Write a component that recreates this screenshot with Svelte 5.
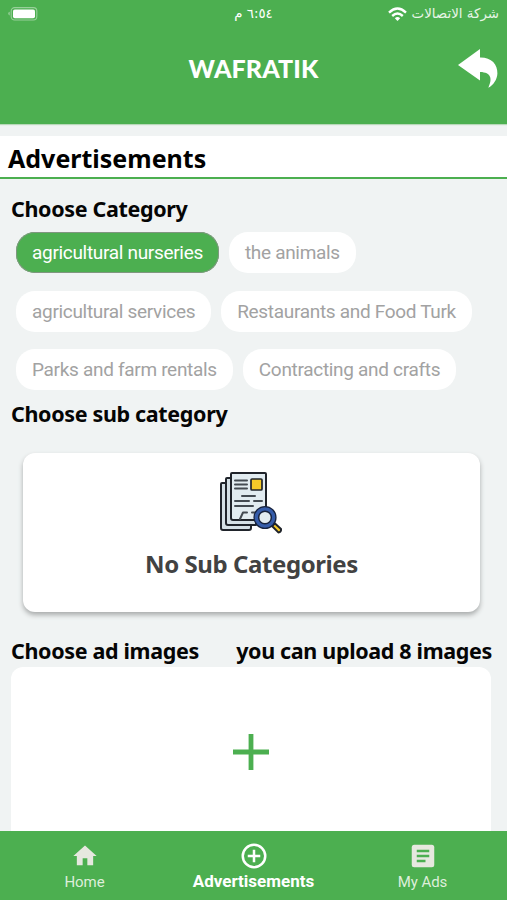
<script>
  const rows = [
    [
      { name: 'agricultural nurseries', active: true },
      { name: 'the animals' },
    ],
    [{ name: 'agricultural services' }, { name: 'Restaurants and Food Turk' }],
    [{ name: 'Parks and farm rentals' }, { name: 'Contracting and crafts' }],
  ];
</script>

<div class="app">
  <header>
    <div class="status">
      <svg class="battery" width="30" height="14" viewBox="0 0 30 14">
        <path d="M1.600 4.700Q.4 5 .4 6.500T1.600 8.400Z" fill="#a5d6a7" />
        <rect x="3.2" y=".6" width="25.6" height="12.4" rx="3.4" fill="none" stroke="#98d09a" stroke-width="1.1" />
        <rect x="5" y="2.4" width="22" height="8.800" rx="1.8" fill="#fff" />
      </svg>
      <span class="time" dir="rtl">٦:٥٤ م</span>
      <div class="carrier">
        <svg width="19" height="15" viewBox="0 0 19 15" fill="none" stroke="#fff" stroke-width="2.4">
          <path d="M1 5.600Q9.500-2.400 18 5.600" />
          <path d="M4.200 9Q9.500 4.100 14.800 9" />
          <path d="M9.500 14 6.800 11.200Q9.500 9 12.200 11.200Z" fill="#fff" stroke="none" />
        </svg>
        <span dir="rtl">شركة الاتصالات</span>
      </div>
    </div>
    <div class="brand">
      <h1>WAFRATIK</h1>
      <svg class="back" width="40" height="39" viewBox="0 0 40 39">
        <path d="M0 16 22 0V8.400C33.500 8.200 39.700 15 39.400 24.500 39.200 30.500 35.500 36 30.300 38.800 34.500 30 33.500 23.200 22 23V31.500Z" fill="#fff" />
      </svg>
    </div>
  </header>

  <h2 class="page-title"><span>Advertisements</span></h2>

  <main>
    <h3>Choose Category</h3>
    <div class="categories">
      {#each rows as row}
        <div class="row">
          {#each row as item}
            <button class="chip" class:active={item.active}>{item.name}</button>
          {/each}
        </div>
      {/each}
    </div>

    <h3 class="sub">Choose sub category</h3>
    <section class="empty">
      <svg width="64" height="62" viewBox="0 0 64 62" stroke="#20242b" stroke-width="2" stroke-linejoin="round" stroke-linecap="round">
        <path d="M6 11H2Q1 11 1 12V56Q1 58 3 58H29Q31 58 31 56V52" fill="#d5e0e6" />
        <path d="M11 6H7Q6 6 6 7V51Q6 53 8 53H36V48" fill="#d5e0e6" />
        <path d="M12 1H45Q46 1 46 2V48H13Q11 48 11 46V2Q11 1 12 1Z" fill="#e2ecf1" />
        <path d="M15 8.500H27M15 12.500H27M15 16.500H27M22 24H35M15 29H29M34 29H42M15 34H33M20 47 23 40.500H27M32 40.500H36" fill="none" stroke="#444b52" />
        <rect x="31" y="7" width="11" height="11" rx="1" fill="#f5ca29" stroke-width="1.7" />
        <path d="M52 54 55 51.500 61 57Q61.500 60 58.300 60.400Z" fill="#f5ca29" />
        <circle cx="45" cy="45.5" r="8.600" fill="#e2ecf1" stroke="#17233e" stroke-width="6" />
        <circle cx="45" cy="45.5" r="8.700" fill="none" stroke="#355ca9" stroke-width="3.3" />
      </svg>
      <p>No Sub Categories</p>
    </section>

    <div class="upload-title">
      <h3>Choose ad images</h3>
      <h3>you can upload 8 images</h3>
    </div>
    <button class="upload" aria-label="Add">
      <svg width="36" height="36" viewBox="0 0 36 36"><path d="M18 0V36M0 18H36" stroke="#4caf50" stroke-width="4.8" /></svg>
    </button>
  </main>

  <nav>
    <div class="tab">
      <svg width="28" height="28" viewBox="0 0 24 24"><path d="M10 20v-6h4v6h5v-8h3L12 3 2 12h3v8z" fill="#e6e8df" /></svg>
      <span>Home</span>
    </div>
    <div class="tab current">
      <svg width="30" height="30" viewBox="0 0 24 24" fill="none" stroke="#fff" stroke-width="2">
        <circle cx="12" cy="12" r="9" />
        <path d="M12 7V17M7 12H17" />
      </svg>
      <span>Advertisements</span>
    </div>
    <div class="tab">
      <svg width="30" height="30" viewBox="0 0 24 24">
        <rect x="3" y="3" width="18" height="18" rx="2" fill="#e6e8df" />
        <path d="M7 8H17M7 12H17M7 16H14" stroke="#4caf50" stroke-width="2" />
      </svg>
      <span>My Ads</span>
    </div>
  </nav>
</div>

<style>
  :global(body) { margin: 0; }
  .app {
    width: 507px;
    height: 900px;
    display: flex;
    flex-direction: column;
    overflow: hidden;
    background: #f0f3f3;
    font-family: Roboto, sans-serif;
  }
  h1, h2, h3, p { margin: 0; white-space: nowrap; }
  header {
    height: 124px;
    flex: none;
    background: #4caf50;
    box-shadow: 0 1px 1px #b8d8b9;
    color: #fff;
  }
  .status {
    height: 28px;
    display: grid;
    grid-template-columns: 1fr auto 1fr;
    align-items: center;
    font: 14px/28px "DejaVu Sans", sans-serif;
  }
  .battery { margin-left: 8px; }
  .time { font-size: 13.3px; }
  .carrier {
    display: flex;
    justify-content: flex-end;
    align-items: center;
    gap: 5px;
    padding-right: 8px;
    font-size: 13.4px;
  }
  .carrier span { white-space: nowrap; color: #e7f5e7; }
  .brand {
    height: 80px;
    display: grid;
    grid-template-columns: 1fr auto 1fr;
    align-items: center;
  }
  h1 {
    grid-column: 2;
    font: 900 25px/32px Lato, sans-serif;
    letter-spacing: 0.1px;
  }
  .back { justify-self: end; margin-right: 9px; }
  .page-title {
    height: 41px;
    flex: none;
    margin-top: 12px;
    padding-left: 8px;
    background: #fff;
    border-bottom: 2px solid #4caf50;
    font: 700 25px/44px "Noto Sans", sans-serif;
  }
  main { flex: 1; min-height: 0; overflow: hidden; padding: 15px 15px 0 11px; }
  h3 { font: 700 21.5px/30px "Noto Sans", sans-serif; letter-spacing: -0.34px; color: #050505; }
  .categories {
    display: flex;
    flex-direction: column;
    gap: 17.5px;
    padding: 8px 0 0 5px;
  }
  .row { display: flex; gap: 10px; }
  .chip {
    height: 41px;
    padding: 0 16px;
    border: 0;
    border-radius: 19px;
    background: #fff;
    color: #a2a2a2;
    font: 19px/41px Roboto, sans-serif;
    letter-spacing: -0.31px;
    white-space: nowrap;
  }
  .chip.active { background: #4caf50; color: #fff; box-shadow: inset 0 0 0 1px #809680; }
  .sub { margin-top: 9px; }
  .empty {
    height: 159px;
    box-sizing: border-box;
    margin: 24px 12px 0 12px;
    padding-top: 19px;
    border-radius: 12px;
    background: #fff;
    box-shadow: 0 3px 5px #a9acac;
    display: flex;
    flex-direction: column;
    align-items: center;
  }
  .empty p {
    margin-top: 13px;
    font: 700 24px/34px "Noto Sans", sans-serif;
    letter-spacing: -0.42px;
    color: #424242;
  }
  .upload-title { display: flex; justify-content: space-between; margin-top: 24px; }
  .upload {
    display: flex;
    justify-content: center;
    box-sizing: border-box;
    width: 480px;
    height: 190px;
    margin-top: 1px;
    padding: 67px 0 0;
    border: 0;
    border-radius: 12px;
    background: #fff;
  }
  nav {
    height: 69px;
    flex: none;
    display: grid;
    grid-template-columns: repeat(3, 1fr);
    background: #4caf50;
  }
  .tab { display: flex; flex-direction: column; align-items: center; padding-top: 10px; color: #deeedb; }
  .tab svg { flex: none; height: 30px; }
  .tab span { font-size: 15px; line-height: 22px; letter-spacing: -0.1px; }
  .tab.current { color: #fff; }
  .tab.current span { font-weight: 700; font-size: 17px; line-height: 20px; letter-spacing: 0; }
</style>
